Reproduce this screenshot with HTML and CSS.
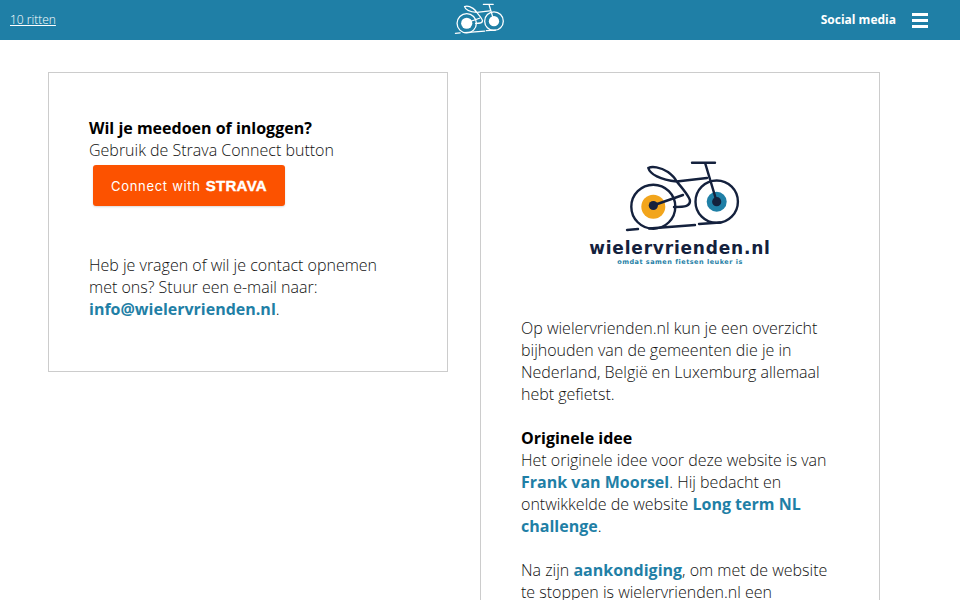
FILE: index.html
```html
<!DOCTYPE html>
<html lang="nl">
  <head>
    <meta charset="UTF-8">
    <title>Wielervrienden.nl</title>
    <link rel="stylesheet" href="styles.css">
  </head>
  <body>
    <header class="topbar">
      <a class="rides" href="#">10 ritten</a>
      <svg class="toplogo" viewBox="0 0 80 42" width="80" height="42" aria-hidden="true">
        <g transform="translate(-4.800 -1.100) scale(.43)">
          <g fill="none" stroke="#fff" stroke-width="3" stroke-linecap="round" stroke-linejoin="round">
            <circle cx="73.300" cy="56.700" r="22.500"/>
            <circle cx="136.700" cy="51.700" r="21.700"/>
            <path d="M112 12.700H135M125 12.700L136.700 51.700M96.700 31.500L127 28M68.300 18C72 16 80 17 88 22C92 25 95 28 96.700 31.500M68.300 18C70 24 80 30 96.700 31.500C103 39 110 47 110 51C110 56 106 57 94 57M73 55.500L103 45M47 80L58 79M69 78.500L115 75M119 74L140 72.500"/>
          </g>
          <circle cx="73.300" cy="56.700" r="13" fill="#fff"/>
          <circle cx="136.700" cy="51.700" r="12" fill="#fff"/>
        </g>
      </svg>
      <nav class="topnav">
        <a class="social" href="#">Social media</a>
        <span class="burger"><i></i><i></i><i></i></span>
      </nav>
    </header>

    <main class="columns">
      <section class="card card-login">
        <p><strong>Wil je meedoen of inloggen?</strong><br>Gebruik de Strava Connect button</p>
        <a class="strava" href="#">Connect with <b>STRAVA</b></a>
        <p class="contact">Heb je vragen of wil je contact opnemen met ons? Stuur een e-mail naar: <a href="#">info@wielervrienden.nl</a>.</p>
      </section>

      <section class="card card-about">
        <div class="brand">
          <svg viewBox="0 0 200 88" width="200" height="88" aria-hidden="true">
            <circle cx="73.300" cy="56.700" r="12" fill="#f2a51c"/>
            <circle cx="136.700" cy="51.700" r="10" fill="#1f7fa6"/>
            <g fill="none" stroke="#14213d" stroke-width="2.400" stroke-linecap="round" stroke-linejoin="round">
              <circle cx="73.300" cy="56.700" r="22"/>
              <circle cx="136.700" cy="51.700" r="21.200"/>
              <path d="M112 12.700H135M125 12.700L136.700 51.700M96.700 31.500L127 28M68.300 18C72 16 80 17 88 22C92 25 95 28 96.700 31.500M68.300 18C70 24 80 30 96.700 31.500C103 39 110 47 110 51C110 56 106 57 94 57M73 55.500L103 45M47 80L58 79M69 78.500L115 75M119 74L140 72.500"/>
            </g>
            <circle cx="73.300" cy="55.500" r="4.600" fill="#14213d"/>
            <circle cx="136.700" cy="51.700" r="4.600" fill="#14213d"/>
          </svg>
          <div class="brand-name">wielervrienden.nl</div>
          <div class="brand-tag">omdat samen fietsen leuker is</div>
        </div>
        <p>Op wielervrienden.nl kun je een overzicht bijhouden van de gemeenten die je in Nederland, België en Luxemburg allemaal hebt gefietst.</p>
        <p><strong>Originele idee</strong><br>Het originele idee voor deze website is van <a href="#">Frank van Moorsel</a>. Hij bedacht en ontwikkelde de website <a href="#">Long term NL challenge</a>.</p>
        <p>Na zijn <a href="#">aankondiging</a>, om met de website te stoppen is wielervrienden.nl een</p>
      </section>
    </main>
  </body>
</html>
```

FILE: styles.css
```css
html, body { margin: 0; padding: 0; height: 600px; overflow: hidden; }
body { background-color: #fff; color: #111; font-family: "Open Sans", sans-serif; font-size: 16px; font-weight: 300; line-height: 22px; }

p { margin: 0 0 22px 0; }
strong { font-weight: 700; color: #000; }
a { color: #1f7fa6; font-weight: 700; text-decoration: none; }

.topbar { height: 40px; background-color: #1f7fa6; display: flex; align-items: center; justify-content: space-between; padding: 0 32px 0 10px; position: relative; }
.rides { color: #fff; font-size: 12px; font-weight: 300; text-decoration: underline; }
.toplogo { position: absolute; left: 440px; top: 0; }
.topnav { display: flex; align-items: center; gap: 16px; }
.social { color: #fff; font-size: 12px; font-weight: 700; }
.burger { display: flex; flex-direction: column; gap: 3px; width: 16px; }
.burger i { display: block; height: 3px; background-color: #fff; }

.columns { display: flex; align-items: flex-start; gap: 32px; padding: 32px 48px 0 48px; }
.card { width: 400px; box-sizing: border-box; border: 1px solid #ccc; padding: 44px 40px 40px 40px; }
.card-login { height: 300px; }
.card-login p { margin: 0; }
.card-about { height: 640px; padding-top: 77px; }

.strava { display: flex; align-items: center; justify-content: center; gap: 5px; width: 192px; height: 41px; margin: 4px 0 0 4px; background-color: #fc5200; border-radius: 3px; box-shadow: 0 1px 2px rgba(0, 0, 0, .15); color: #fff; font-family: "Inter", sans-serif; font-size: 13px; font-weight: 400; letter-spacing: .7px; white-space: nowrap; }
.strava b { font-family: "Liberation Sans", sans-serif; font-size: 15px; font-weight: 700; letter-spacing: .3px; -webkit-text-stroke: .4px #fff; }
.card-login .contact { margin-top: 48px; }
.contact a { font-weight: 700; }

.brand { width: 200px; margin: 0 0 50px 59px; display: flex; flex-direction: column; align-items: center; }
.brand svg { display: block; }
.brand-name { margin-top: -1px; color: #14213d; font-family: "DejaVu Sans", sans-serif; font-size: 17px; font-weight: 700; letter-spacing: .8px; line-height: 22px; white-space: nowrap; }
.brand-tag { margin-top: -2px; color: #1f7fa6; font-family: "DejaVu Sans", sans-serif; font-size: 6.500px; font-weight: 700; letter-spacing: .5px; line-height: 10px; white-space: nowrap; }
```
